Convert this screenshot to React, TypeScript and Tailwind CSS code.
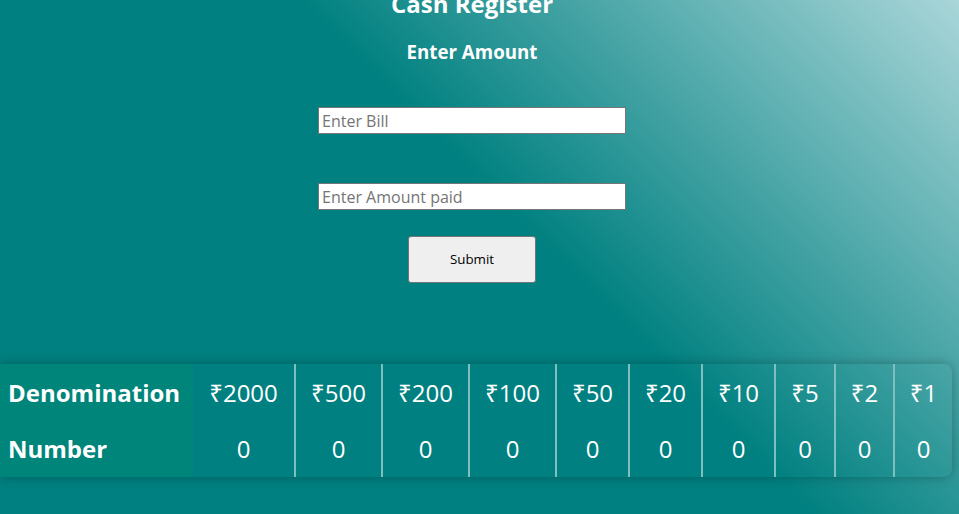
import React from "react";

const denoms = [
  { label: "₹2000", w: "w-[101px]" },
  { label: "₹500", w: "w-[87px]" },
  { label: "₹200", w: "w-[87px]" },
  { label: "₹100", w: "w-[87px]" },
  { label: "₹50", w: "w-[73px]" },
  { label: "₹20", w: "w-[73px]" },
  { label: "₹10", w: "w-[73px]" },
  { label: "₹5", w: "w-[60px]" },
  { label: "₹2", w: "w-[59px]" },
  { label: "₹1", w: "w-[59px]" },
];

export default function App() {
  return (
    <div className="w-[959px] h-[514px] overflow-hidden text-white font-['Open_Sans','Noto_Sans',sans-serif] bg-[linear-gradient(225deg,#a9d6d9_0%,#008080_45%,#008080_100%)]">
      <div className="w-[944px] flex flex-col items-center -mt-[13px]">
        <h2 className="text-[24px] font-bold leading-[33px]">Cash Register</h2>
        <h3 className="text-[18.72px] font-bold leading-[25px] mt-[19px]">Enter Amount</h3>
        <input
          placeholder="Enter Bill"
          className="mt-[43px] w-[308px] h-[27px] bg-white border border-[#767676] px-[3px] text-[16px] text-black placeholder:text-[#757575] outline-none"
        />
        <input
          placeholder="Enter Amount paid"
          className="mt-[49px] w-[308px] h-[27px] bg-white border border-[#767676] px-[3px] text-[16px] text-black placeholder:text-[#757575] outline-none"
        />
        <button className="mt-[26px] w-[128px] h-[47px] bg-[#efefef] border border-[#767676] rounded-[3px] text-[13.33px] text-black">
          Submit
        </button>
      </div>
      <div className="mt-[81px] flex w-[952px] rounded-r-lg overflow-hidden shadow-[0_0_12px_rgba(0,0,0,0.28)] text-[24px]">
        <div className="w-[193px] bg-[#00857a] flex flex-col font-bold">
          <div className="h-[57px] flex items-center pl-[8px]">Denomination</div>
          <div className="h-[56px] flex items-center pl-[8px]">Number</div>
        </div>
        {denoms.map((d, i) => (
          <div
            key={d.label}
            className={`${d.w} flex flex-col ${i > 0 ? "border-l-2 border-[#7fbfc0]" : ""}`}
          >
            <div className="h-[57px] flex items-center justify-center">{d.label}</div>
            <div className="h-[56px] flex items-center justify-center">0</div>
          </div>
        ))}
      </div>
    </div>
  );
}
